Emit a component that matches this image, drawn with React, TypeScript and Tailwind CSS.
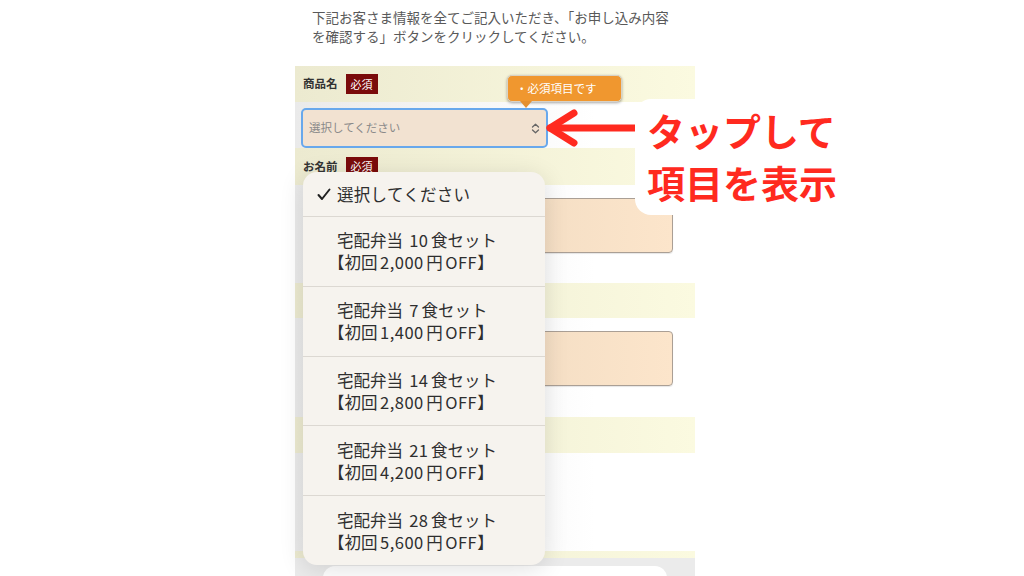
import React from "react";

const items = [
  ["宅配弁当 10食セット", "【初回2,000円OFF】"],
  ["宅配弁当 7食セット", "【初回1,400円OFF】"],
  ["宅配弁当 14食セット", "【初回2,800円OFF】"],
  ["宅配弁当 21食セット", "【初回4,200円OFF】"],
  ["宅配弁当 28食セット", "【初回5,600円OFF】"],
];

function Spaced({ text }: { text: string }) {
  const parts = text.split(/([0-9A-Z,]+)/);
  return (
    <>
      {parts.map((p, i) => {
        if (!/^[0-9A-Z,]+$/.test(p)) return <span key={i}>{p}</span>;
        const tight = (parts[i + 1] || "").startsWith("】");
        return (
          <span key={i} className={tight ? "ml-[2.5px] tracking-[0.5px]" : "mx-[2.5px] tracking-[0.5px]"}>
            {p}
          </span>
        );
      })}
    </>
  );
}

function Band({ h, children }: { h: string; children?: React.ReactNode }) {
  return (
    <div
      className={`${h} flex items-center pl-[8px] gap-[8px] bg-[linear-gradient(to_right,#ecead0,#fbfae0)]`}
    >
      {children}
    </div>
  );
}

function Label({ text }: { text: string }) {
  return (
    <>
      <span className="text-[11.5px] font-bold text-[#333] leading-none">{text}</span>
      <span className="w-[32px] h-[20px] flex items-center justify-center bg-[#7a0b0b] text-white text-[11px] leading-none">
        必須
      </span>
    </>
  );
}

function Field({ h, children }: { h: string; children?: React.ReactNode }) {
  return (
    <div className={`${h} pl-[12px] bg-[linear-gradient(to_right,#eaeaea,#ffffff_75%)]`}>{children}</div>
  );
}

function Input() {
  return (
    <div className="w-[366px] h-[55px] mt-[13px] rounded-[4px] border border-[#aa9f95] bg-[linear-gradient(to_right,#e9d4ba,#fce5cb)] shadow-[0_1px_1px_rgba(0,0,0,0.1)]" />
  );
}

export default function App() {
  return (
    <div className="relative w-[1024px] h-[576px] overflow-hidden bg-white font-['Noto_Sans_CJK_JP',sans-serif]">
      <div className="ml-[295px] w-[400px] flex flex-col">
        <div className="h-[66px] pt-[8px] pl-[17px] text-[13.5px] leading-[19px] text-[#595959] whitespace-nowrap">
          下記お客さま情報を全てご記入いただき、「お申し込み内容
          <br />
          を確認する」ボタンをクリックしてください。
        </div>
        <Band h="h-[36px]">
          <Label text="商品名" />
        </Band>
        <div className="h-[46px] pl-[6px] pt-[6px] bg-[linear-gradient(to_right,#eaeaea,#ffffff_75%)]">
          <div className="w-[247px] h-[40px] rounded-[5px] border-2 border-[#68a8ec] bg-[#f2e2d1] flex items-center pl-[6px] pr-[6px] justify-between">
            <span className="text-[11.5px] text-[#8a8a8a]">選択してください</span>
            <svg width="9" height="11" viewBox="0 0 9 11" fill="none" stroke="#666" strokeWidth="1.3" strokeLinecap="round" strokeLinejoin="round">
              <path d="M1.5 4 L4.5 1.3 L7.5 4" />
              <path d="M1.5 7 L4.5 9.7 L7.5 7" />
            </svg>
          </div>
        </div>
        <Band h="h-[37px]">
          <Label text="お名前" />
        </Band>
        <Field h="h-[98px]">
          <Input />
        </Field>
        <Band h="h-[35px]" />
        <Field h="h-[99px]">
          <Input />
        </Field>
        <Band h="h-[36px]" />
        <Field h="h-[98px]" />
        <Band h="h-[7px]" />
        <div className="h-[30px] bg-[#ebebeb] pt-[8px] pl-[28px]">
          <div className="w-[344px] h-[30px] rounded-[12px] bg-white" />
        </div>
      </div>

      {/* tooltip */}
      <div className="absolute left-[507px] top-[75px] w-[115px] h-[27px] rounded-[5px] bg-[#f0972f] border-[1.5px] border-[#d8d2c6] shadow-[0_1px_3px_rgba(0,0,0,0.35)] flex items-center pl-[8px] text-white text-[11.5px]">
        ・必須項目です
      </div>
      <div className="absolute left-[520px] top-[101px] w-0 h-0 border-l-[6px] border-r-[6px] border-t-[7px] border-l-transparent border-r-transparent border-t-[#e59030]" />

      {/* red arrow */}
      <svg className="absolute left-[540px] top-[106px]" width="100" height="46" viewBox="0 0 100 46" fill="none" stroke="#ff2a1f" strokeWidth="7" strokeLinecap="round" strokeLinejoin="round">
        <path d="M10 22 L97 22" />
        <path d="M34 7 L10 22 L34 37" />
      </svg>

      {/* callout */}
      <div className="absolute left-[635px] top-[99px] w-[240px] h-[116px] rounded-[16px] bg-white pl-[12px] pt-[5px] text-[38px] leading-[52px] font-bold text-[#ff2a1f] whitespace-nowrap">
        タップして
        <br />
        項目を表示
      </div>

      {/* dropdown */}
      <div className="absolute left-[303px] top-[172px] w-[242px] h-[393px] rounded-[14px] bg-[#f6f3ee] shadow-[0_4px_24px_rgba(0,0,0,0.12)] flex flex-col overflow-hidden text-[16.5px] text-[#2e2e2e]">
        <div className="h-[45px] flex items-center pl-[14px] border-b border-[#dcd8d2] shrink-0">
          <svg width="14" height="13" viewBox="0 0 14 13" fill="none" stroke="#222" strokeWidth="2" strokeLinecap="round" strokeLinejoin="round">
            <path d="M1.5 7 L5 11 L12.5 1.5" />
          </svg>
          <span className="ml-[6px] tracking-[0.3px]">選択してください</span>
        </div>
        {items.map(([a, b], i) => (
          <div
            key={i}
            className={`flex-1 flex flex-col justify-center pl-[34px] leading-[22px] whitespace-nowrap ${i < items.length - 1 ? "border-b border-[#dcd8d2]" : ""}`}
          >
            <span>
              <Spaced text={a} />
            </span>
            <span className="-ml-[9px]">
              <Spaced text={b} />
            </span>
          </div>
        ))}
      </div>
    </div>
  );
}
